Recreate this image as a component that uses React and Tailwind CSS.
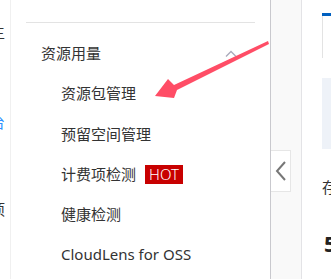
export default function App() {
  const items = ["资源包管理", "预留空间管理", "计费项检测", "健康检测", "CloudLens for OSS"];

  return (
    <div
      className="relative flex w-[331px] h-[279px] overflow-hidden bg-white text-[#333]"
      style={{ fontFamily: '"Noto Sans", "Noto Sans CJK SC", sans-serif' }}
    >
      {/* previous nav, clipped */}
      <div className="w-[11px] shrink-0 overflow-hidden border-r border-[#f0f0f0] text-[15px] whitespace-nowrap">
        <div className="-ml-[10px] mt-[22px] leading-[20px]">主</div>
        <div className="-ml-[10px] mt-[70px] leading-[20px] text-[#2e90ff]">台</div>
        <div className="-ml-[10px] mt-[67px] leading-[20px]">项</div>
      </div>

      {/* sidebar */}
      <div className="w-[260px] shrink-0 border-r border-[#c9c9ce] pt-[22px]">
        <div className="mx-[15px] border-t border-[#e3e3e3]" />
        <div className="flex items-center justify-between pl-[30px] pr-[33px] mt-[20px] h-[20px] text-[15px] leading-[20px]">
          <span>资源用量</span>
          <svg width="12" height="7" viewBox="0 0 12 7" fill="none">
            <path d="M1 6.5 6 1.5l5 5" stroke="#aab" strokeWidth="1.3" />
          </svg>
        </div>
        <div className="mt-[11px] pl-[50px] text-[15px]">
          {items.map((t, i) => (
            <div key={t} className={`flex items-center h-[40px] ${i === 0 ? "mt-[1px]" : ""}`}>
              <span className={i === 0 ? "-mt-[2px]" : ""}>{t}</span>
              {t === "计费项检测" && (
                <span className="ml-[9px] bg-[#c80000] text-white font-light px-[4px] h-[19px] leading-[19px] text-[15px]">
                  HOT
                </span>
              )}
            </div>
          ))}
        </div>
      </div>

      {/* collapse column */}
      <div className="w-[31px] shrink-0 bg-[#f9f9f9] border-r border-[#e3e3e6] pt-[150px]">
        <div className="w-[20px] h-[42px] bg-white border border-[#e6e6e6] border-l-0 flex items-center justify-center">
          <svg width="12" height="20" viewBox="0 0 12 20" fill="none">
            <path d="M10 1 2 10l8 9" stroke="#777" strokeWidth="2" />
          </svg>
        </div>
      </div>

      {/* content, clipped */}
      <div className="flex-1 relative whitespace-nowrap">
        <div className="absolute left-[20px] top-[13px] w-[20px] h-[3px] bg-[#0060c0]" />
        <div className="absolute left-[20px] top-[16px] w-[1px] h-[42px] bg-[#e3e3e3]" />
        <div className="absolute left-[20px] top-[78px] w-[20px] h-[71px] bg-[#eef2f8]" />
        <div className="absolute left-[20px] top-[177px] text-[15px] leading-[20px]">存储</div>
        <div className="absolute left-[22px] top-[233px] text-[22px] font-bold leading-[20px] text-[#222]">5</div>
      </div>

      {/* annotation arrow */}
      <svg className="absolute left-0 top-0 pointer-events-none" width="331" height="279">
        <path d="M268 41 L174 85 L168 79 L155 96 L174 98 L177 90 L269 44 Z" fill="#ff4d66" />
      </svg>
    </div>
  );
}
